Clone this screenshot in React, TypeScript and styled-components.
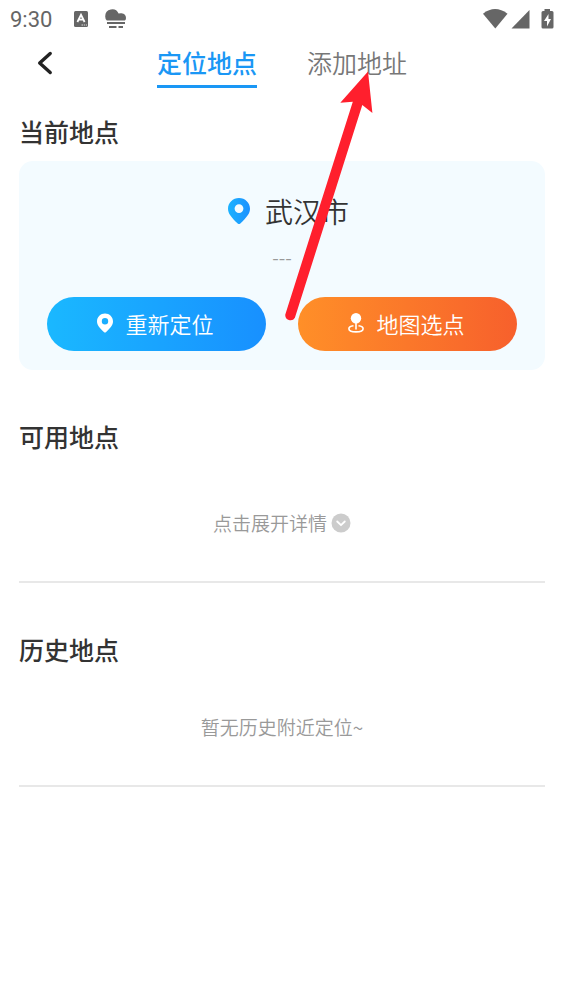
import React, { useState } from "react";
import styled, { createGlobalStyle, css } from "styled-components";

const GlobalStyle = createGlobalStyle`
  *, *::before, *::after { box-sizing: border-box; }
  body {
    margin: 0;
    background: #fff;
    color: #333;
    font-family: "Noto Sans CJK SC", sans-serif;
    font-weight: 350;
  }
  button {
    margin: 0;
    padding: 0;
    border: 0;
    background: none;
    font: inherit;
    color: inherit;
    cursor: pointer;
  }
  svg { display: block; flex: none; }
`;

const Screen = styled.div`
  position: relative;
  min-height: 100vh;
  background: #fff;
`;

const StatusBar = styled.div`
  display: flex;
  align-items: center;
  height: 38px;
  padding: 0 10px;
  color: #666;
`;

const Clock = styled.time`
  padding-top: 2px;
  font: 400 22px/26px Roboto, sans-serif;
`;

const StatusIcons = styled.div<{ $end?: boolean }>`
  display: flex;
  align-items: center;
  gap: ${(p) => (p.$end ? 0 : 16)}px;
  margin-left: ${(p) => (p.$end ? "auto" : "21px")};
`;

const NavBar = styled.header`
  display: grid;
  grid-template-columns: 64px 1fr 64px;
  align-items: center;
  height: 50px;
`;

const BackButton = styled.button`
  display: flex;
  align-items: center;
  justify-content: center;
  height: 50px;
  padding-left: 26px;
`;

const Tabs = styled.nav`
  display: flex;
  justify-content: center;
  gap: 50px;
`;

const Tab = styled.button<{ $active: boolean }>`
  height: 50px;
  padding-top: 1px;
  border-bottom: 3px solid transparent;
  font-size: 25px;
  line-height: 46px;
  color: #777;
  ${(p) =>
    p.$active &&
    css`
      border-color: #1a97f5;
      color: #1a97f5;
      font-weight: 500;
    `}
`;

const Content = styled.main`
  padding: 25px 19px;
`;

const SectionTitle = styled.h2`
  margin: 0;
  font-size: 25px;
  font-weight: 500;
  line-height: 36px;
`;

const Section = styled.section`
  margin-bottom: 48px;
`;

const ListSection = styled(Section)`
  border-bottom: 2px solid #e8e8e8;
`;

const Card = styled.div`
  margin-top: 12px;
  padding: 30px 28px 19px;
  border-radius: 14px;
  background: #f3fbff;
`;

const City = styled.div`
  display: flex;
  align-items: center;
  justify-content: center;
  gap: 15px;
  padding-left: 13px;
  font-size: 28px;
  line-height: 40px;
`;

const Address = styled.p`
  margin: 12px 0 26px;
  font-size: 19px;
  line-height: 28px;
  text-align: center;
  color: #999;
`;

const Actions = styled.div`
  display: flex;
  gap: 32px;
`;

const ActionButton = styled.button<{ $from: string; $to: string }>`
  display: flex;
  flex: 1;
  align-items: center;
  justify-content: center;
  gap: 12px;
  height: 54px;
  padding: 0 2px 2px 0;
  border-radius: 27px;
  background: linear-gradient(90deg, ${(p) => p.$from}, ${(p) => p.$to});
  font-size: 22px;
  color: #fff;
`;

const Hint = styled.p<{ $gap: number }>`
  margin: 0;
  padding: ${(p) => p.$gap}px 0 44px;
  font-size: 19px;
  line-height: 28px;
  text-align: center;
  color: #999;
`;

const ExpandButton = styled.button`
  display: inline-flex;
  align-items: center;
  gap: 4px;
  line-height: 28px;
  vertical-align: top;
`;

const Arrow = styled.svg`
  position: absolute;
  top: 70px;
  left: 50%;
  pointer-events: none;
`;

const PIN =
  "M11 0C4.9 0 0 4.8 0 10.8C0 15.6 3.4 19.4 9.4 25.3Q11 26.8 12.6 25.3C18.6 19.4 22 15.6 22 10.8C22 4.8 17.1 0 11 0ZM11 6.2A4.4 4.4 0 1 1 11 15A4.4 4.4 0 1 1 11 6.2Z";

function Pin({ width, height, gradient }: { width: number; height: number; gradient?: boolean }) {
  return (
    <svg width={width} height={height} viewBox="0 0 22 26" aria-hidden="true">
      {gradient && (
        <defs>
          <linearGradient id="pin">
            <stop offset="0" stopColor="#1bb2ff" />
            <stop offset="1" stopColor="#1c91ff" />
          </linearGradient>
        </defs>
      )}
      <path d={PIN} fillRule="evenodd" fill={gradient ? "url(#pin)" : "#fff"} />
    </svg>
  );
}

function MapPoint() {
  return (
    <svg width="16" height="20" viewBox="0 0 16 20" fill="none" stroke="#fff" aria-hidden="true">
      <circle cx="8" cy="5.2" r="5.2" fill="#fff" stroke="none" />
      <path d="M8 9V16.5" strokeWidth="1.6" />
      <path d="M5.5 12.8C2.5 13.2 .9 14.3 .9 15.7C.9 17.6 4 18.9 8 18.9S15.1 17.6 15.1 15.7C15.1 14.3 13.5 13.2 10.5 12.8" strokeWidth="1.6" />
    </svg>
  );
}

const TABS = ["定位地点", "添加地址"];

export default function App() {
  const [tab, setTab] = useState(0);
  return (
    <>
      <GlobalStyle />
      <Screen>
        <StatusBar>
          <Clock>9:30</Clock>
          <StatusIcons>
            <svg width="16" height="18" viewBox="0 0 16 18" aria-hidden="true">
              <rect x="1" y="1" width="14" height="16" rx="1.5" fill="#666" />
              <path d="M4.4 12L8 4.8L11.6 12M5.7 9.7H10.3" fill="none" stroke="#fff" strokeWidth="1.8" />
              <path d="M8.5 15H10M10.8 15H12.2M13 15H14" stroke="#ddd" />
            </svg>
            <svg width="22" height="20" viewBox="0 0 22 20" fill="#666" aria-hidden="true">
              <path d="M1.8 11.5Q.2 10 .2 7.4A7 7 0 0 1 13.6 4.6Q15 4 16.5 4.2Q21 5 21 9Q21 10.5 20 11.5Z" />
              <path d="M2 14H20M4 18H11.5M13.5 18H18" stroke="#666" strokeWidth="1.8" />
            </svg>
          </StatusIcons>
          <StatusIcons $end>
            <svg width="71" height="22" viewBox="0 0 71 22" fill="#666" aria-hidden="true">
              <path d="M0 5.7Q12 -3.6 24.5 5.7L12.3 20.5Z" />
              <path d="M46.5 2V20.5H28.5Z" />
              <path
                fillRule="evenodd"
                d="M61.5 1H67V3H69Q70.5 3 70.5 4.5V19Q70.5 20.5 69 20.5H60Q58.5 20.5 58.5 19V4.5Q58.5 3 60 3H61.5ZM65.5 6L61 13H64V18.5L68 11H65.5Z"
              />
            </svg>
          </StatusIcons>
        </StatusBar>

        <NavBar>
          <BackButton aria-label="返回">
            <svg width="16" height="24" viewBox="0 0 16 24" aria-hidden="true">
              <path d="M13.2 2.5L2.7 12L13.2 21.5" fill="none" stroke="#222" strokeWidth="3.4" strokeLinecap="round" strokeLinejoin="round" />
            </svg>
          </BackButton>
          <Tabs>
            {TABS.map((name, i) => (
              <Tab key={name} $active={i === tab} aria-pressed={i === tab} onClick={() => setTab(i)}>
                {name}
              </Tab>
            ))}
          </Tabs>
        </NavBar>

        <Content>
          <Section>
            <SectionTitle>当前地点</SectionTitle>
            <Card>
              <City>
                <Pin width={22} height={26} gradient />
                武汉市
              </City>
              <Address>---</Address>
              <Actions>
                <ActionButton $from="#1ab8ff" $to="#1890ff">
                  <Pin width={16} height={20} />
                  重新定位
                </ActionButton>
                <ActionButton $from="#ff8f28" $to="#f7602c">
                  <MapPoint />
                  地图选点
                </ActionButton>
              </Actions>
            </Card>
          </Section>

          <ListSection>
            <SectionTitle>可用地点</SectionTitle>
            <Hint $gap={55}>
              <ExpandButton>
                点击展开详情
                <svg width="20" height="20" viewBox="0 0 20 20" aria-hidden="true">
                  <circle cx="10" cy="10" r="9.5" fill="#ccc" />
                  <path d="M6.2 8.5L10 12.2L13.8 8.5" fill="none" stroke="#fff" strokeWidth="1.8" strokeLinecap="round" strokeLinejoin="round" />
                </svg>
              </ExpandButton>
            </Hint>
          </ListSection>

          <ListSection>
            <SectionTitle>历史地点</SectionTitle>
            <Hint $gap={46}>暂无历史附近定位~</Hint>
          </ListSection>
        </Content>

        <Arrow width="94" height="254" viewBox="0 0 94 254" aria-hidden="true">
          <path
            d="M86 1.5L58.3 32.7L70.8 31.8L3.3 244.5A5.2 5.2 0 0 0 12.9 247.8L80.3 35L90.4 43Z"
            fill="#ff1f2d"
          />
        </Arrow>
      </Screen>
    </>
  );
}
